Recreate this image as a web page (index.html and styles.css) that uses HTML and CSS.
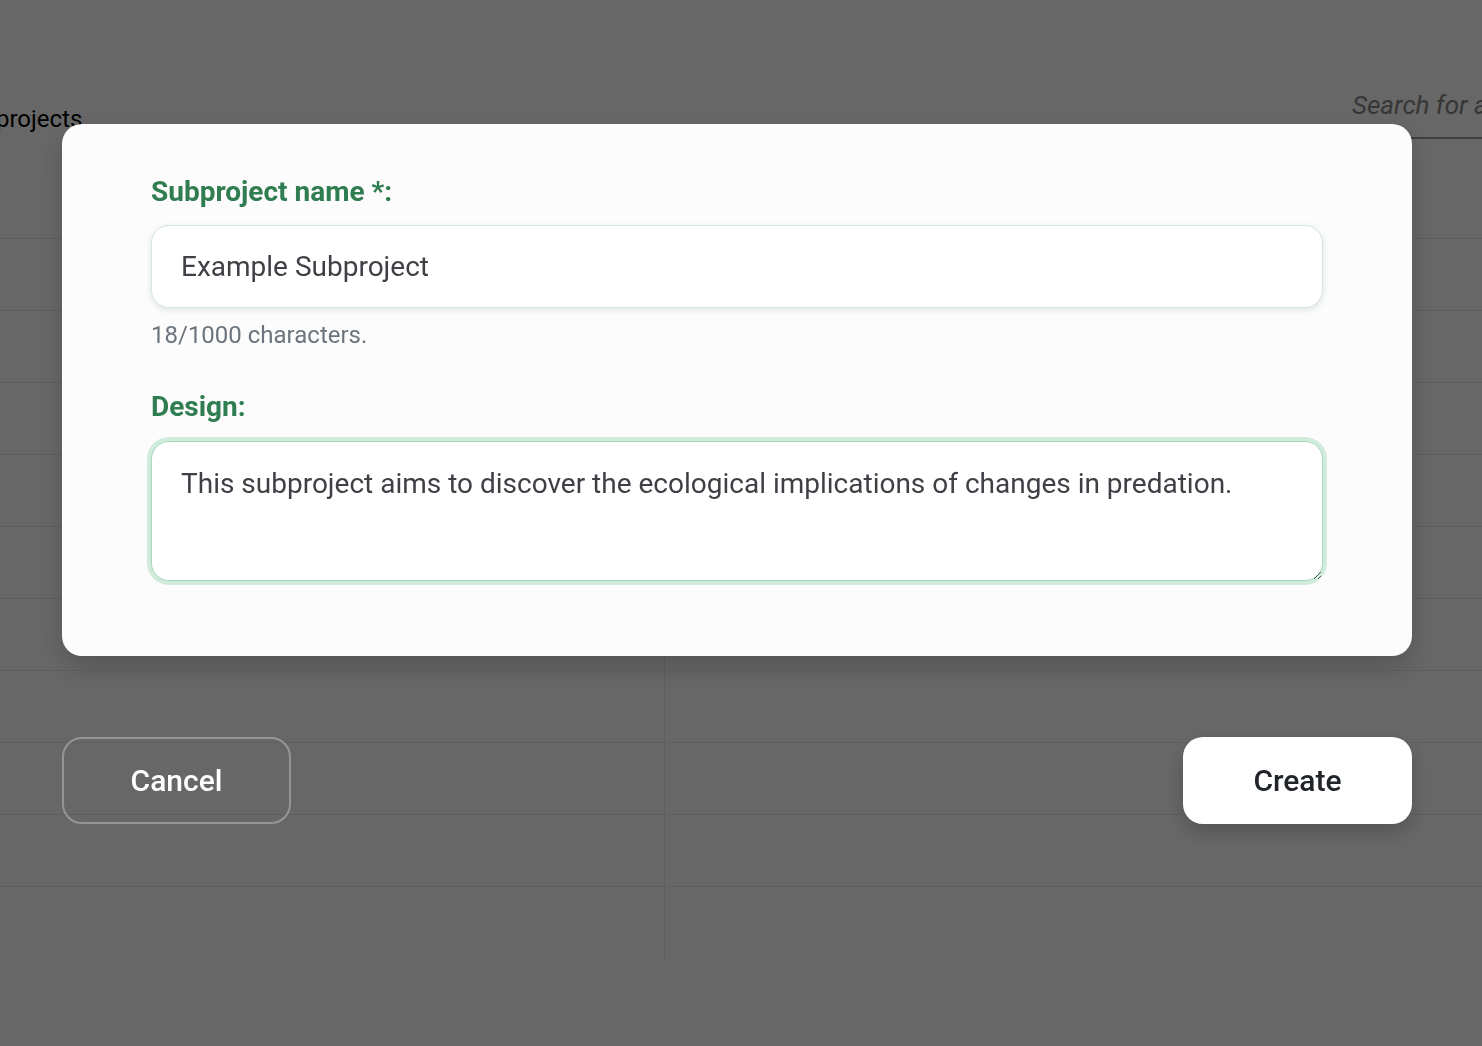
FILE: index.html
```html
<!DOCTYPE html>
<html lang="en">
<head>
<meta charset="utf-8">
<title>New subproject</title>
<link rel="stylesheet" href="styles.css">
</head>
<body>
<div class="page">
  <header class="page-header">
    <h1 class="page-title">Subprojects</h1>
    <input class="search" type="text" placeholder="Search for a subproject">
  </header>
  <div class="table">
    <div class="row"><div class="cell"></div><div class="cell"></div></div>
    <div class="row"><div class="cell"></div><div class="cell"></div></div>
    <div class="row"><div class="cell"></div><div class="cell"></div></div>
    <div class="row"><div class="cell"></div><div class="cell"></div></div>
    <div class="row"><div class="cell"></div><div class="cell"></div></div>
    <div class="row"><div class="cell"></div><div class="cell"></div></div>
    <div class="row"><div class="cell"></div><div class="cell"></div></div>
    <div class="row"><div class="cell"></div><div class="cell"></div></div>
    <div class="row"><div class="cell"></div><div class="cell"></div></div>
    <div class="row"><div class="cell"></div><div class="cell"></div></div>
    <div class="row last"><div class="cell"></div><div class="cell"></div></div>
  </div>
</div>

<div class="overlay">
  <div class="dialog">
    <label class="field-label" for="name">Subproject name *:</label>
    <input class="text-input" id="name" type="text" value="Example Subproject">
    <div class="counter">18/1000 characters.</div>
    <label class="field-label design-label" for="design">Design:</label>
    <textarea class="text-area" id="design">This subproject aims to discover the ecological implications of changes in predation.</textarea>
  </div>
  <div class="actions">
    <button class="btn btn-cancel" type="button">Cancel</button>
    <button class="btn btn-create" type="button">Create</button>
  </div>
</div>
</body>
</html>
```

FILE: styles.css
```css
html, body {
  margin: 0;
  padding: 0;
  height: 100%;
  overflow: hidden;
}

body {
  background: #ffffff;
  font-family: Roboto, "Liberation Sans", Arial, sans-serif;
}

.page {
  width: 1482px;
}

.page-header {
  display: flex;
  justify-content: space-between;
  align-items: flex-end;
  height: 139px;
}

.page-title {
  margin: 0 0 5px -45px;
  font-size: 24px;
  font-weight: 400;
  line-height: 30px;
  color: #000000;
}

.search {
  width: 250px;
  height: 60px;
  margin-right: -113px;
  padding: 0 0 6px 7px;
  border: none;
  border-bottom: 2px solid #9a9a9a;
  font-family: Roboto, "Liberation Sans", Arial, sans-serif;
  font-size: 26px;
  background: transparent;
  box-sizing: border-box;
}

.search::placeholder {
  color: #858585;
  font-style: italic;
}

.table {
  margin-top: 28px;
  display: flex;
  flex-direction: column;
}

.row {
  display: grid;
  grid-template-columns: 665px 1fr;
  height: 72px;
  border-bottom: 1px solid #ebebeb;
  box-sizing: border-box;
}

.row.last {
  border-bottom: none;
  height: 71px;
}

.cell:first-child {
  border-right: 1px solid #ebebeb;
}

.overlay {
  position: fixed;
  inset: 0;
  background: rgba(0, 0, 0, 0.597);
  display: flex;
  flex-direction: column;
  padding: 124px 0 0 62px;
  box-sizing: border-box;
}

.dialog {
  width: 1350px;
  box-sizing: border-box;
  background: #fcfcfc;
  border-radius: 20px;
  padding: 51px 89px 75px 89px;
  display: flex;
  flex-direction: column;
  box-shadow: 0 12px 28px rgba(0, 0, 0, 0.18);
}

.field-label {
  font-size: 28px;
  font-weight: 700;
  line-height: 33px;
  color: #2f7d50;
}

.text-input {
  margin-top: 17px;
  height: 83px;
  box-sizing: border-box;
  padding: 0 29px;
  border: 1px solid #d6e6de;
  border-radius: 18px;
  background: #ffffff;
  box-shadow: 0 2px 6px rgba(60, 110, 90, 0.16);
  font-family: Roboto, "Liberation Sans", Arial, sans-serif;
  font-size: 28px;
  color: #3f3f46;
  outline: none;
}

.counter {
  margin-top: 9px;
  font-size: 24px;
  line-height: 36px;
  color: #6c757d;
}

.design-label {
  margin-top: 37px;
}

.text-area {
  margin-top: 18px;
  height: 140px;
  box-sizing: border-box;
  padding: 21px 29px;
  border: 1px solid #a9d7bd;
  border-radius: 18px;
  background: #ffffff;
  box-shadow: 0 0 0 4px #d0eadc;
  font-family: Roboto, "Liberation Sans", Arial, sans-serif;
  font-size: 28px;
  line-height: 42px;
  color: #3f3f46;
  outline: none;
  resize: vertical;
}

.actions {
  width: 1350px;
  margin-top: 81px;
  display: flex;
  justify-content: space-between;
}

.btn {
  width: 229px;
  height: 87px;
  border-radius: 20px;
  font-family: Roboto, "Liberation Sans", Arial, sans-serif;
  font-size: 30px;
  font-weight: 500;
  cursor: pointer;
}

.btn-cancel {
  background: transparent;
  border: 2px solid rgba(255, 255, 255, 0.3);
  color: #ffffff;
}

.btn-create {
  background: #ffffff;
  border: none;
  color: #212529;
  box-shadow: 0 8px 20px rgba(0, 0, 0, 0.2);
}
```
